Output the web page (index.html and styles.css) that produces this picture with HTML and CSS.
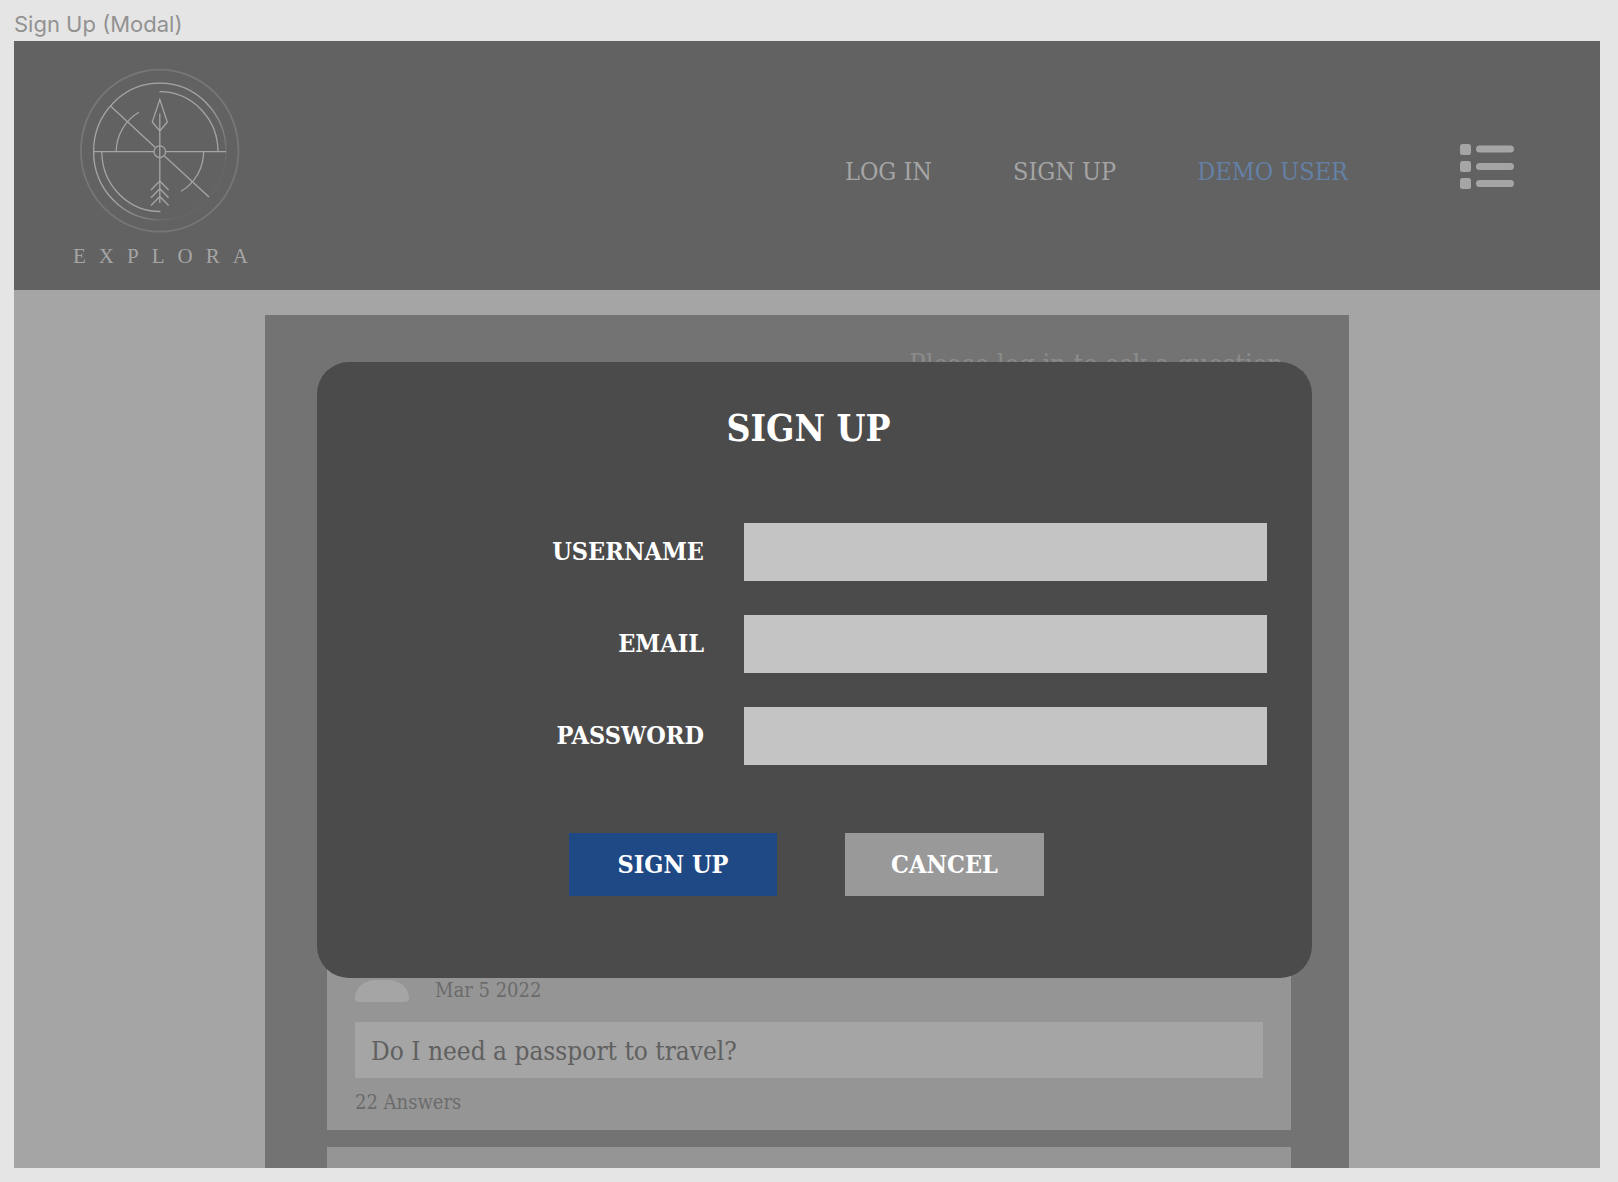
FILE: index.html
```
<!DOCTYPE html>
<html lang="en">
<head>
<meta charset="utf-8">
<meta name="viewport" content="width=device-width, initial-scale=1">
<title>Sign Up (Modal)</title>
<link rel="stylesheet" href="styles.css">
</head>
<body>
<p class="frame-label">Sign Up (Modal)</p>
<div class="frame">
  <header class="header">
    <a class="brand" href="#">
      <svg class="brand-mark" viewBox="80 68 162 168" fill="none" stroke="#a5a5a5" stroke-width="1.3" aria-hidden="true">
        <defs>
          <linearGradient id="fade" x1="0" y1="0" x2="1" y2="1">
            <stop offset="0.5" stop-color="#a5a5a5"/>
            <stop offset="0.8" stop-color="#a5a5a5" stop-opacity="0.05"/>
          </linearGradient>
        </defs>
        <ellipse cx="160.7" cy="150.7" rx="78.8" ry="81" stroke="#777" stroke-width="1.8"/>
        <ellipse cx="160.8" cy="151.5" rx="66.2" ry="68.3" stroke="url(#fade)"/>
        <path d="M160.5 91.7A58.5 60 0 0 1 219 151.5M102.8 152A58.5 60 0 0 0 161.5 211.5"/>
        <path d="M117.2 151.5A44 45.5 0 0 1 140 112.3M204.6 152A44 45.5 0 0 1 182 191.3"/>
        <path d="M111.5 106L156.3 147.4M165.2 155.8L210 197"/>
        <path d="M94.5 151.7H155M166.5 151.7H227"/>
        <circle cx="160.8" cy="151.7" r="5.8"/>
        <path d="M160.8 113.5V203M160.8 99.5L168.300 122L160.800 131L153.300 122Z"/>
        <path d="M152 190L160.800 181L169.600 190M152 197.800L160.800 188.800L169.600 197.800M152 205.500L160.800 196.500L169.600 205.500"/>
      </svg>
      <span class="brand-name">EXPLORA</span>
    </a>
    <nav class="nav">
      <a class="nav-link" href="#">LOG IN</a>
      <a class="nav-link" href="#">SIGN UP</a>
      <a class="nav-link nav-link-demo" href="#">DEMO USER</a>
      <button class="menu" type="button" aria-label="Menu">
        <svg class="menu-icon" viewBox="0 0 54 46" fill="currentColor" aria-hidden="true">
          <rect x="0" y="0" width="11" height="11" rx="2.500"/><rect x="16" y="1.500" width="38" height="7" rx="3.500"/>
          <rect x="0" y="17" width="11" height="11" rx="2.500"/><rect x="16" y="19" width="38" height="7" rx="3.500"/>
          <rect x="0" y="34" width="11" height="11" rx="2.500"/><rect x="16" y="36" width="38" height="7" rx="3.500"/>
        </svg>
      </button>
    </nav>
  </header>
  <main class="main">
    <section class="panel">
      <p class="prompt">Please log in to ask a question</p>
      <article class="card">
        <div class="author">
          <svg class="avatar" viewBox="0 0 54 60" fill="currentColor" aria-hidden="true">
            <circle cx="27" cy="17" r="15"/>
            <path d="M21 38H33C45 38 54 46 54 56Q54 60 50 60H4Q0 60 0 56C0 46 9 38 21 38Z"/>
          </svg>
          <time class="date" datetime="2022-03-05">Mar 5 2022</time>
        </div>
        <h2 class="question">Do I need a passport to travel?</h2>
        <p class="answers">22 Answers</p>
      </article>
      <article class="card card-next"></article>
    </section>
  </main>
  <div class="overlay">
    <form class="modal" role="dialog" aria-labelledby="modal-title">
      <h1 class="modal-title" id="modal-title">SIGN UP</h1>
      <div class="fields">
        <label class="label" for="username">USERNAME</label>
        <input class="input" id="username" type="text">
        <label class="label" for="email">EMAIL</label>
        <input class="input" id="email" type="email">
        <label class="label" for="password">PASSWORD</label>
        <input class="input" id="password" type="password">
      </div>
      <div class="actions">
        <button class="button button-primary" type="submit">SIGN UP</button>
        <button class="button button-cancel" type="button">CANCEL</button>
      </div>
    </form>
  </div>
</div>
</body>
</html>
```
FILE: styles.css
```
* {
  box-sizing: border-box;
  margin: 0;
}

body {
  min-height: 100vh;
  padding: 8px 18px 14px 14px;
  display: flex;
  flex-direction: column;
  background: #e5e5e5;
  font-family: "Roboto Slab", "DejaVu Serif Condensed", "DejaVu Serif", serif;
}

.frame-label {
  height: 33px;
  font: 22px/32px Inter, sans-serif;
  color: #929292;
}

.frame {
  position: relative;
  flex: 1;
  display: flex;
  flex-direction: column;
  background: #a5a5a5;
}

.header {
  display: flex;
  justify-content: space-between;
  padding: 27px 86px 24px 59px;
  background: #626262;
}

.brand {
  display: flex;
  flex-direction: column;
  align-items: center;
  gap: 10px;
  color: #a5a5a5;
  text-decoration: none;
}

.brand-mark {
  width: 162px;
  height: 168px;
}

/* The negative margin drops the tracking after the last letter. */
.brand-name {
  margin-right: -13px;
  font: 21px/20px "Liberation Serif", serif;
  letter-spacing: 13px;
}

.nav {
  display: flex;
  align-items: center;
  gap: 81px;
}

.nav-link {
  padding-top: 10px;
  font-size: 25px;
  line-height: 32px;
  color: #a5a5a5;
  text-decoration: none;
}

.nav-link-demo {
  color: #6480a5;
}

.menu {
  margin-left: 31px;
  padding: 0;
  border: 0;
  background: none;
  color: #a5a5a5;
}

.menu-icon {
  display: block;
  width: 54px;
  height: 46px;
}

.main {
  flex: 1;
  display: flex;
  justify-content: center;
  padding-top: 25px;
}

.panel {
  width: 1084px;
  display: flex;
  flex-direction: column;
  gap: 17px;
  padding: 34px 58px 0 62px;
  background: #737373;
}

.prompt {
  height: 536px;
  padding-right: 8px;
  font-size: 27px;
  line-height: 32px;
  text-align: right;
  color: #8b8b8b;
}

.card {
  padding: 40px 28px 16px;
  background: #959595;
}

.card-next {
  flex: 1;
  padding: 0;
}

.author {
  display: flex;
  align-items: flex-end;
  gap: 26px;
}

.avatar {
  width: 54px;
  height: 60px;
  color: #a5a5a5;
}

.date,
.answers {
  font-size: 20px;
  line-height: 24px;
  font-weight: 300;
  color: #6b6b6b;
}

.question {
  margin: 20px 0 12px;
  padding: 13px 16px 11px;
  font-size: 26px;
  line-height: 32px;
  font-weight: 400;
  background: #a5a5a5;
  color: #606060;
}

.overlay {
  position: absolute;
  inset: 0;
  display: flex;
  justify-content: center;
  align-items: flex-start;
  padding: 321px 0 0 15px;
}

.modal {
  width: 995px;
  padding: 42px 45px 82px;
  border-radius: 32px;
  background: #4b4b4b;
  color: #fff;
}

.modal-title {
  padding-right: 12px;
  font-size: 37px;
  line-height: 48px;
  font-weight: 600;
  text-align: center;
}

.fields {
  display: grid;
  grid-template-columns: 1fr 523px;
  gap: 34px 40px;
  margin-top: 71px;
}

.label {
  align-self: center;
  font-size: 25px;
  line-height: 32px;
  font-weight: 600;
  text-align: right;
}

.input {
  width: 100%;
  height: 58px;
  padding: 0 16px;
  border: 0;
  border-radius: 0;
  background: #c4c4c4;
  font: inherit;
  font-size: 25px;
}

.actions {
  display: flex;
  justify-content: center;
  gap: 68px;
  margin-top: 68px;
  padding-right: 16px;
}

.button {
  height: 63px;
  padding: 0;
  border: 0;
  font: inherit;
  font-size: 25px;
  font-weight: 600;
  color: #fff;
}

.button-primary {
  width: 208px;
  background: #1e4985;
}

.button-cancel {
  width: 199px;
  background: #999;
}
```
